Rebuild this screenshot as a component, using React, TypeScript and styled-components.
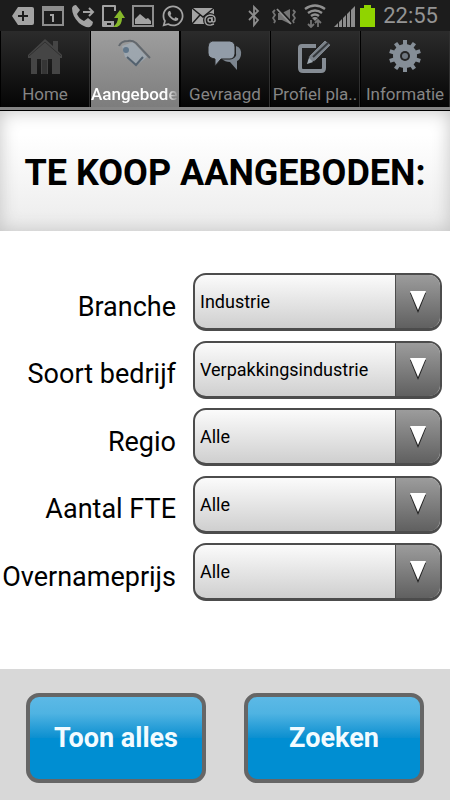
import { ReactNode, useState } from "react";
import { FaWhatsapp } from "react-icons/fa";
import styled, { createGlobalStyle } from "styled-components";

interface Field {
  id: string;
  label: string;
  options: string[];
}

const fields: Field[] = [
  { id: "branche", label: "Branche", options: ["Industrie", "Alle"] },
  {
    id: "soort",
    label: "Soort bedrijf",
    options: ["Verpakkingsindustrie", "Alle"],
  },
  { id: "regio", label: "Regio", options: ["Alle"] },
  { id: "fte", label: "Aantal FTE", options: ["Alle"] },
  { id: "prijs", label: "Overnameprijs", options: ["Alle"] },
];

const TagPlusIcon = () => (
  <svg width="24" height="24" viewBox="0 0 24 24">
    <path d="M7 3h14q2 0 2 2v14q0 2-2 2H7L1 12z" fill="#a3a3a3" />
    <path d="M12 7v10M7 12h10" stroke="#1c1c1c" strokeWidth="2" />
  </svg>
);

const CalendarIcon = () => (
  <svg width="24" height="24" viewBox="0 0 24 24" fill="none">
    <path d="M2 3h20v18H2z" stroke="#8d8d8d" strokeWidth="2" />
    <path d="M1 2h22v5H1z" fill="#8d8d8d" />
    <path d="M9 11h3v7" stroke="#a3a3a3" strokeWidth="2" />
  </svg>
);

const CallIcon = () => (
  <svg width="24" height="24" viewBox="0 0 24 24" fill="none">
    <path
      d="M1 4q1-3 4-3l4 5-3 4q2 5 7 7l4-3 5 4q0 3-3 5-5 1-11-4Q1 12 1 4z"
      fill="#a3a3a3"
    />
    <path d="M12 8h9M18 4l4 4-4 4" stroke="#a3a3a3" strokeWidth="2" />
  </svg>
);

const PhoneUploadIcon = () => (
  <svg width="24" height="24" viewBox="0 0 24 24" fill="none">
    <path
      d="M14 7V2H2v20h11"
      stroke="#a3a3a3"
      strokeWidth="2"
      strokeLinejoin="round"
    />
    <path d="M2 17h11v5H2z" fill="#a3a3a3" />
    <path d="M6 20h4" stroke="#1c1c1c" strokeWidth="2" />
    <path d="M12 23q5-4 5-9h-4l6-8 5 8h-3q0 7-5 9z" fill="#86b92b" />
  </svg>
);

const PictureIcon = () => (
  <svg width="24" height="24" viewBox="0 0 24 24" fill="none">
    <path d="M2 2h20v20H2z" stroke="#8d8d8d" strokeWidth="2" />
    <path d="M4 20v-5l5-5 6 5 2-1 3 3v3z" fill="#a3a3a3" />
  </svg>
);

const MailIcon = () => (
  <svg width="26" height="24" viewBox="0 0 26 24" fill="none">
    <path d="M1 4h22v16H1z" fill="#a3a3a3" />
    <path
      d="M1 4l11 9L23 4M1 20l8-9M23 20l-8-9"
      stroke="#1c1c1c"
      strokeWidth="1.5"
    />
    <circle cx="19" cy="16" r="7" fill="#1c1c1c" />
    <circle cx="19" cy="16" r="2" stroke="#a3a3a3" strokeWidth="1.4" />
    <path
      d="M21 13v4q1 2 3 0 1-6-5-6-5 1-5 5 0 6 6 5l3-1"
      stroke="#a3a3a3"
      strokeWidth="1.4"
    />
  </svg>
);

const BluetoothIcon = () => (
  <svg width="16" height="24" viewBox="0 0 16 24" fill="none">
    <path d="M1 7l9 9-4 5V3l4 4-9 9" stroke="#8d8d8d" strokeWidth="1.8" />
  </svg>
);

const VibrateIcon = () => (
  <svg width="24" height="24" viewBox="0 0 24 24" fill="none">
    <path d="M6 9h4l8-4v15l-8-4H6z" fill="#747474" />
    <path
      d="M3 6L1 8l2 3-2 3 2 3-1 2M21 6l2 2-2 3 2 3-2 3 1 2"
      stroke="#747474"
      strokeWidth="1.8"
    />
    <path d="M6 4l14 15" stroke="#1c1c1c" strokeWidth="2" />
    <path d="M5 5l14 15" stroke="#909090" strokeWidth="1.8" />
  </svg>
);

const WifiIcon = () => (
  <svg width="22" height="24" viewBox="0 0 22 24" fill="none">
    <g stroke="#909090" strokeWidth="2.4">
      <path d="M1 5q10-7 20 0M4 9q7-5 14 0M7 12q4-3 8 0" />
    </g>
    <path d="M8 14q3-2 6 0l-3 3z" fill="#909090" />
    <path
      d="M7 16v7M4 20l3 3 3-3M14 23v-7M11 19l3-3 3 3"
      stroke="#747474"
      strokeWidth="1.8"
    />
  </svg>
);

const SignalIcon = () => (
  <svg width="21" height="24" viewBox="0 0 21 24" fill="#8d8d8d">
    <path d="M0 23l4-4v4zM5 18l3-3v8H5zM9 14l3-3v12H9zM13 10l3-3v16h-3zM17 6l4-4v21h-4z" />
  </svg>
);

const BatteryIcon = () => (
  <svg width="15" height="24" viewBox="0 0 15 24">
    <path d="M4 1h7v3h4v19H0V4h4z" fill="#90d400" />
  </svg>
);

const HomeIcon = () => (
  <svg width="36" height="36" viewBox="0 0 36 36">
    <path
      d="M18 0l8 7V2h5v10l4 4v3h-2v16h-8V20h-4v15h-7V20h-4v15H4V19H1v-3z"
      fill="#454545"
    />
    <path d="M15 21h5v14h-5z" fill="#353535" />
    <path
      d="M2 17L18 3l16 14"
      stroke="#303030"
      strokeWidth="1"
      fill="none"
    />
  </svg>
);

const TagIcon = () => (
  <svg width="36" height="36" viewBox="0 0 36 36" fill="none">
    <path d="M5 7l11-4 14 15-11 9L8 18z" fill="#a3b2c0" opacity="0.6" />
    <path d="M2 7q2-5 9-5 4-1 8 2l14 15" stroke="#62686e" strokeWidth="2" />
    <path d="M10 18l9 8 7-8" stroke="#53616e" strokeWidth="2" />
    <circle cx="9" cy="11" r="3" fill="#60768a" />
  </svg>
);

const ChatIcon = () => (
  <svg width="36" height="36" viewBox="0 0 36 36" fill="#7c858f">
    <path d="M29 7q6 2 5 9-1 5-4 6v9l-7-8q-5 0-8-3h10q5-2 4-6z" />
    <path
      d="M5 2h18q5 1 5 6v7q-1 5-5 5h-9l-6 7v-7q-7-1-7-6V8q0-5 4-6z"
      stroke="#242424"
      strokeWidth="1"
      fill="#929ca8"
    />
  </svg>
);

const EditIcon = () => (
  <svg width="36" height="36" viewBox="0 0 36 36" fill="none">
    <path
      d="M19 7H5q-2 0-2 2v20q0 3 3 3h18q3 0 3-3V19"
      stroke="#858c94"
      strokeWidth="4"
    />
    <path
      d="M10 25l2-8L28 1l6 5-16 16z"
      fill="#7b828a"
      stroke="#242424"
      strokeWidth="1"
    />
    <path d="M16 18L31 4" stroke="#33373b" strokeWidth="2" />
    <path d="M10 25l2-6 4 4z" fill="#a0a9b1" />
  </svg>
);

const GearIcon = () => (
  <svg width="36" height="36" viewBox="0 0 36 36" fill="none">
    {[0, 36, 72, 108, 144].map((angle) => (
      <path
        key={angle}
        d="M18 1v32"
        stroke="#858e97"
        strokeWidth="4"
        transform={`rotate(${angle} 18 17)`}
      />
    ))}
    <circle cx="18" cy="17" r="12" fill="#858e97" />
    <circle cx="18" cy="17" r="5" fill="#242424" />
    <circle cx="18" cy="17" r="3" fill="#6f7780" />
  </svg>
);

const tabs: { name: string; icon: ReactNode }[] = [
  { name: "Home", icon: <HomeIcon /> },
  { name: "Aangeboden", icon: <TagIcon /> },
  { name: "Gevraagd", icon: <ChatIcon /> },
  { name: "Profiel pla..", icon: <EditIcon /> },
  { name: "Informatie", icon: <GearIcon /> },
];

const App = () => {
  const [activeTab, setActiveTab] = useState("Aangeboden");

  return (
    <>
      <GlobalStyle />
      <Screen>
        <StatusBar>
          <Notifications>
            <TagPlusIcon />
            <CalendarIcon />
            <CallIcon />
            <PhoneUploadIcon />
            <PictureIcon />
            <FaWhatsapp size={24} />
            <MailIcon />
          </Notifications>
          <SystemIcons>
            <BluetoothIcon />
            <VibrateIcon />
            <WifiIcon />
            <SignalIcon />
          </SystemIcons>
          <BatteryIcon />
          <Clock>22:55</Clock>
        </StatusBar>

        <TabBar>
          {tabs.map(({ name, icon }) => (
            <Tab
              key={name}
              $active={name === activeTab}
              onClick={() => setActiveTab(name)}
            >
              {icon}
              <TabLabel $active={name === activeTab}>{name}</TabLabel>
            </Tab>
          ))}
        </TabBar>

        <Header>
          <Title>TE KOOP AANGEBODEN:</Title>
        </Header>

        <SearchForm id="search">
          {fields.map(({ id, label, options }) => (
            <FieldRow key={id}>
              <Label htmlFor={id}>{label}</Label>
              <SelectBox>
                <Select id={id}>
                  {options.map((option) => (
                    <option key={option}>{option}</option>
                  ))}
                </Select>
                <Arrow>
                  <svg width="16" height="22" viewBox="0 0 16 22">
                    <path d="M0 2h16L8 22z" fill="#222" />
                    <path d="M0 0h16L8 19z" fill="#fff" />
                  </svg>
                </Arrow>
              </SelectBox>
            </FieldRow>
          ))}
        </SearchForm>

        <Footer>
          <ActionButton type="reset" form="search">
            Toon alles
          </ActionButton>
          <ActionButton type="button">Zoeken</ActionButton>
        </Footer>
      </Screen>
    </>
  );
};

export default App;

const GlobalStyle = createGlobalStyle`
  * {
    box-sizing: border-box;
  }
  body {
    margin: 0;
    background: #fff;
  }
  body, button, select {
    font-family: Roboto, "Liberation Sans", sans-serif;
  }
`;

const Screen = styled.div`
  display: flex;
  flex-direction: column;
  min-height: 100vh;
`;

const StatusBar = styled.div`
  display: flex;
  align-items: center;
  height: 31px;
  padding: 0 12px 0 11px;
  background: #1c1c1c;
`;

const Notifications = styled.div`
  display: flex;
  gap: 6px;
  margin-right: auto;
  color: #a3a3a3;
`;

const SystemIcons = styled.div`
  display: flex;
  gap: 8px;
  margin-right: 5px;
`;

const Clock = styled.time`
  margin-left: 8px;
  font-size: 22px;
  line-height: 30px;
  color: #949494;
`;

const TabBar = styled.nav`
  display: grid;
  grid-template-columns: repeat(5, 1fr);
  height: 80px;
  padding-bottom: 3px;
  border-bottom: 1px solid #000;
  background: #858585;
`;

const Tab = styled.button<{ $active: boolean }>`
  display: flex;
  flex-direction: column;
  align-items: center;
  gap: 9px;
  min-width: 0;
  padding: 8px 0 0;
  border: 0;
  border-left: 1px solid #000;
  border-right: 1px solid ${({ $active }) => ($active ? "#000" : "#303030")};
  background: ${({ $active }) =>
    $active
      ? "linear-gradient(#9e9e9e, #7d7d7d)"
      : "linear-gradient(#2b2b2b, #050505)"};
  cursor: pointer;

  svg {
    flex-shrink: 0;
  }
`;

const TabLabel = styled.span<{ $active: boolean }>`
  max-width: 100%;
  overflow: hidden;
  white-space: nowrap;
  font-size: 17px;
  line-height: 20px;
  font-weight: ${({ $active }) => ($active ? 500 : 400)};
  color: ${({ $active }) => ($active ? "#fff" : "#858585")};
  mask-image: ${({ $active }) =>
    $active ? "linear-gradient(90deg, #000 85%, transparent)" : "none"};
`;

const Header = styled.header`
  display: flex;
  align-items: center;
  justify-content: center;
  height: 120px;
  padding-top: 4px;
  background: linear-gradient(#fff 20%, #ebebeb);
  box-shadow: inset 0 0 18px #c4c4c4;
`;

const Title = styled.h1`
  margin: 0;
  font-size: 36px;
  line-height: 44px;
  font-weight: 700;
  white-space: nowrap;
  color: #000;
`;

const SearchForm = styled.form`
  display: flex;
  flex: 1;
  flex-direction: column;
  justify-content: space-between;
  gap: 9px;
  padding: 42px 8px 68px 0;
`;

const FieldRow = styled.div`
  display: grid;
  grid-template-columns: 176px 1fr;
  gap: 17px;
  align-items: center;
`;

const Label = styled.label`
  padding-top: 9px;
  font-size: 27px;
  line-height: 32px;
  text-align: right;
  white-space: nowrap;
  color: #000;
`;

const SelectBox = styled.div`
  position: relative;
`;

const Select = styled.select`
  display: block;
  width: 100%;
  height: 58px;
  padding: 0 50px 0 5px;
  appearance: none;
  border: 2px solid #4c4c4c;
  border-bottom-width: 3px;
  border-radius: 13px;
  background: linear-gradient(#fbfbfb, #cfcfcf);
  font-size: 18px;
  color: #000;
`;

const Arrow = styled.span`
  position: absolute;
  top: 2px;
  right: 2px;
  bottom: 3px;
  display: flex;
  align-items: center;
  justify-content: center;
  width: 45px;
  border-left: 1px solid #4c4c4c;
  border-radius: 0 11px 11px 0;
  background: linear-gradient(#9c9c9c, #606060);
  pointer-events: none;
`;

const Footer = styled.footer`
  display: grid;
  grid-template-columns: 1fr 1fr;
  gap: 38px;
  padding: 24px 26px 17px;
  background: #d8d8d8;
`;

const ActionButton = styled.button`
  height: 90px;
  padding: 0;
  border: 4px solid #666;
  border-radius: 13px;
  background: linear-gradient(#5cb9e6, #4fb3e2 20%, #0b8fd0 50%, #008ed2 50%);
  font-size: 27px;
  font-weight: 700;
  color: #f2fbff;
  cursor: pointer;
`;
